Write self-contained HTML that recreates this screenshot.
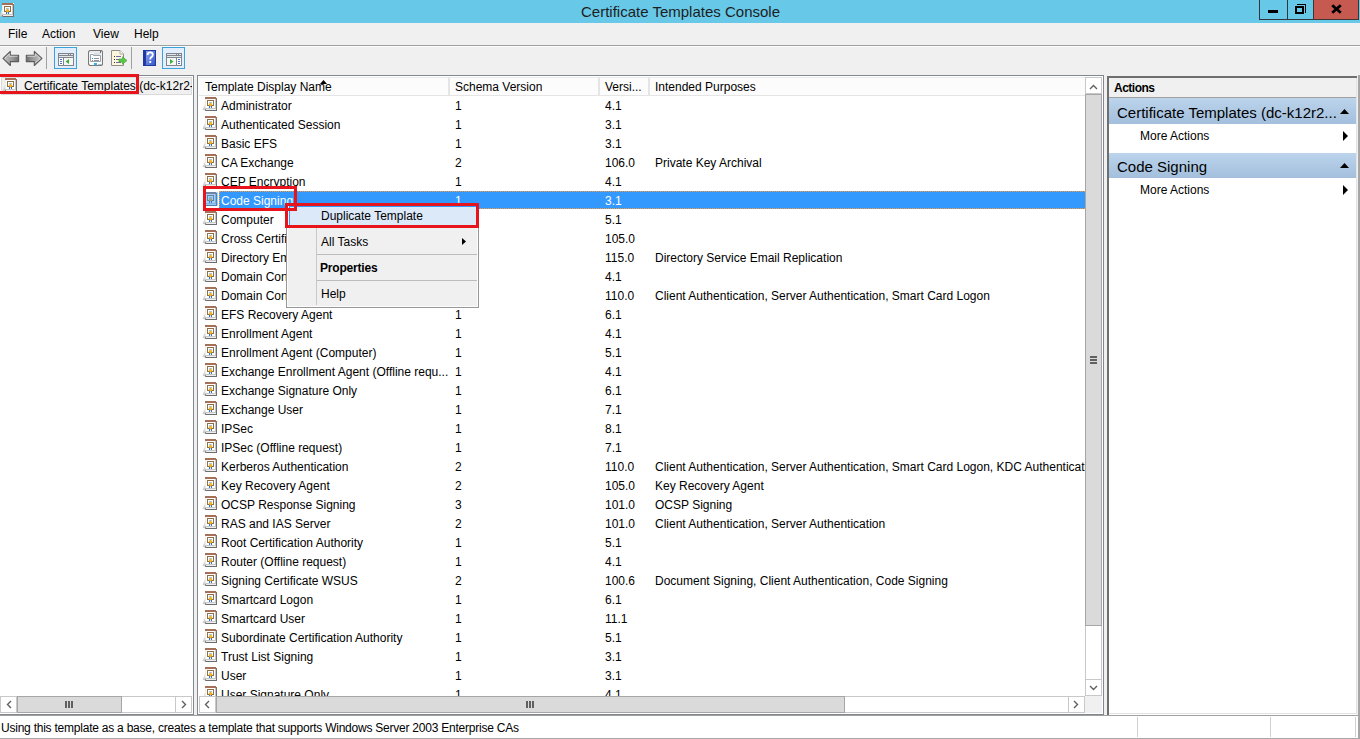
<!DOCTYPE html>
<html><head><meta charset="utf-8"><title>Certificate Templates Console</title>
<style>
*{box-sizing:border-box}
html,body{margin:0;padding:0;width:1360px;height:739px;overflow:hidden;background:#f0f0f0;font-family:"Liberation Sans",sans-serif;font-size:12px;color:#000}
.a{position:absolute}
.t{position:absolute;line-height:20px;white-space:nowrap;font-size:12px}
.ic{position:absolute}
.clip{position:absolute;overflow:hidden}
</style></head><body>
<svg width="0" height="0" style="position:absolute"><symbol id="ci" viewBox="0 0 16 16">
<defs><linearGradient id="wg" x1="0" y1="0" x2="0" y2="1"><stop offset="0" stop-color="#f2f2f2"/><stop offset="1" stop-color="#c4c4c4"/></linearGradient></defs><path d="M0.6 13.8 L3 7.5 L3 14.4 Z" fill="url(#wg)"/>
<g shape-rendering="crispEdges">
<rect x="3" y="1" width="12" height="14" fill="#ffffff"/>
<rect x="3" y="3" width="1" height="9" fill="#ececec"/>
<rect x="3" y="1" width="11" height="2" fill="#a66f57"/>
<rect x="14" y="2" width="1" height="2" fill="#9a6a58"/>
<rect x="13" y="3" width="1" height="10" fill="#c4c4c4"/>
<rect x="14" y="4" width="1" height="11" fill="#6f6f6f"/>
<rect x="3" y="12" width="11" height="1" fill="#c8c8c8"/>
<rect x="3" y="13" width="11" height="1" fill="#eeeeee"/>
<rect x="3" y="14" width="12" height="1" fill="#6c6c6c"/>
<rect x="3" y="13" width="1" height="2" fill="#8a8a8a"/>
<rect x="5" y="4" width="7" height="6" fill="#8d7046"/>
<rect x="6" y="5" width="5" height="4" fill="#ffffff"/>
<rect x="7" y="6" width="3" height="1" fill="#a8c6ef"/>
<rect x="7" y="10" width="1" height="2" fill="#2b6fe6"/>
<rect x="9" y="10" width="1" height="2" fill="#2b6fe6"/>
</g>
<path d="M8.5 6.6 L10.3 8.5 L8.5 11 L6.7 8.5 Z" fill="#e59a08"/>
<circle cx="8.5" cy="8.5" r="1.3" fill="#f4b82a"/>
</symbol></svg>

<div class="a" style="left:0;top:0;width:1360px;height:23px;background:#67c8e8"></div>
<svg class="ic" style="left:-1px;top:2px" width="16" height="16"><use href="#ci"/></svg>
<div class="t" style="left:581px;top:2px;font-size:15px;color:#1e1e1e">Certificate Templates Console</div>
<div class="a" style="left:1259px;top:0;width:100px;height:20px;border:1px solid #30363a;border-top:none;background:#67c8e8"></div>
<div class="a" style="left:1313px;top:0;width:46px;height:20px;border:1px solid #3e3434;border-top:none;background:#c75a50"></div>
<div class="a" style="left:1287px;top:0;width:1px;height:20px;background:#30363a"></div>
<div class="a" style="left:1268px;top:10px;width:10px;height:3px;background:#000"></div>
<div class="a" style="left:1297px;top:4px;width:9px;height:9px;border:1px solid #000;border-width:1px 1px 0 0"></div>
<div class="a" style="left:1295px;top:6px;width:9px;height:8px;border:2px solid #000;border-width:2px 2px 2px 2px"></div>
<svg class="a" style="left:1331px;top:4px" width="11" height="10"><path d="M1.2 1.2 L9.8 8.8 M9.8 1.2 L1.2 8.8" stroke="#000" stroke-width="2.8"/></svg>
<div class="t" style="left:8px;top:24px">File</div>
<div class="t" style="left:42px;top:24px">Action</div>
<div class="t" style="left:93px;top:24px">View</div>
<div class="t" style="left:134px;top:24px">Help</div>
<div class="a" style="left:0;top:45px;width:1360px;height:1px;background:#a0a0a0"></div>
<div class="a" style="left:0;top:46px;width:1360px;height:1px;background:#fcfcfc"></div>
<svg class="a" style="left:2px;top:50px" width="42" height="17">
<defs><linearGradient id="ag" x1="0" y1="0" x2="1" y2="0"><stop offset="0" stop-color="#c4c4c4"/><stop offset="0.6" stop-color="#9a9a9a"/><stop offset="1" stop-color="#6e6e6e"/></linearGradient>
<linearGradient id="ag2" x1="1" y1="0" x2="0" y2="0"><stop offset="0" stop-color="#c4c4c4"/><stop offset="0.6" stop-color="#9a9a9a"/><stop offset="1" stop-color="#6e6e6e"/></linearGradient></defs>
<path d="M1 8.4 L8.3 1.3 L8.3 5.3 L16.6 5.3 L16.6 11.6 L8.3 11.6 L8.3 15.5 Z" fill="url(#ag)" stroke="#5c5c5c" stroke-width="1.1" stroke-linejoin="round"/>
<path d="M2.8 8.4 L7.3 4 L7.3 6.3 L15.6 6.3" fill="none" stroke="#e6e6e6" stroke-width="0.7"/>
<path d="M40 8.4 L32.3 1.3 L32.3 5.3 L24.3 5.3 L24.3 11.6 L32.3 11.6 L32.3 15.5 Z" fill="url(#ag2)" stroke="#5c5c5c" stroke-width="1.1" stroke-linejoin="round"/>
<path d="M38.2 8.4 L33.3 4 L33.3 6.3 M25.3 6.3 L33.3 6.3 M38.2 8.4 L33.3 12.8" fill="none" stroke="#e6e6e6" stroke-width="0.7"/>
</svg>
<div class="a" style="left:46px;top:47px;width:1px;height:22px;background:#a0a0a0"></div>
<div class="a" style="left:54px;top:47px;width:23px;height:22px;border:1px solid #3ba2dc;background:#e2eefb"></div>
<svg class="a" style="left:58px;top:53px" width="16" height="13" shape-rendering="crispEdges">
<rect x="0" y="0" width="16" height="13" fill="#80858d"/>
<rect x="1" y="1" width="14" height="1" fill="#e4e6ea"/>
<rect x="12" y="1" width="1" height="1" fill="#80858d"/><rect x="10" y="1" width="1" height="1" fill="#80858d"/>
<rect x="1" y="3" width="14" height="1" fill="#e4e6ea"/>
<rect x="1" y="5" width="4" height="7" fill="#fff"/>
<rect x="6" y="5" width="9" height="7" fill="#f6f6f6"/>
<rect x="2" y="6" width="2" height="1" fill="#3d70c0"/><rect x="2" y="8" width="2" height="1" fill="#3d70c0"/><rect x="2" y="10" width="2" height="1" fill="#3d70c0"/>
<path d="M11 6 L7.5 8.5 L11 11 Z" fill="#3ab03a" shape-rendering="auto"/>
</svg>
<svg class="a" style="left:88px;top:50px" width="15" height="16">
<rect x="0.5" y="0.5" width="14" height="15" rx="2" fill="#fff" stroke="#7a7a7a" stroke-width="1.2"/>
<rect x="2" y="1.5" width="11" height="1" fill="#d6d8dc"/>
<rect x="12" y="1" width="1" height="2" fill="#5a6a90"/>
<path d="M2.5 4.5 L5.5 4.5 L5.5 5.5 L12.5 5.5 L12.5 11.5 L2.5 11.5 Z" fill="#fff" stroke="#9da3ad" stroke-width="1"/>
<rect x="7" y="4" width="2" height="1" fill="#fff"/><rect x="10" y="4" width="2" height="1" fill="#fff"/>
<rect x="6" y="3.5" width="6.5" height="1" fill="#b8bdc6"/>
<rect x="4" y="8" width="1" height="1" fill="#1ea0e8"/><rect x="6" y="8" width="5" height="1" fill="#8d939c"/>
<rect x="4" y="10" width="1" height="1" fill="#888"/><rect x="6" y="10" width="5" height="1" fill="#8d939c"/>
<rect x="6" y="13" width="3" height="2" fill="#26b6f0"/>
<rect x="10" y="14" width="3" height="1" fill="#bbb"/>
</svg>
<svg class="a" style="left:111px;top:50px" width="17" height="16">
<path d="M0.5 0.5 L9 0.5 L12.5 4 L12.5 15.5 L0.5 15.5 Z" fill="#fcf6dc" stroke="#8e8e8e"/>
<path d="M9 0.5 L9 4 L12.5 4" fill="#fff" stroke="#aaa"/>
<rect x="3" y="6" width="1" height="1" fill="#333"/><rect x="5" y="6" width="5" height="1" fill="#6f6aa8"/>
<rect x="3" y="9" width="1" height="1" fill="#333"/><rect x="5" y="9" width="3" height="1" fill="#6f6aa8"/>
<rect x="3" y="12" width="1" height="1" fill="#333"/><rect x="5" y="12" width="5" height="1" fill="#6f6aa8"/>
<path d="M8 9 L11.5 9 L11.5 6.8 L16 10.5 L11.5 14.2 L11.5 12 L8 12 Z" fill="#5cc84a" stroke="#3aa02c" stroke-width="0.6"/>
</svg>
<div class="a" style="left:131px;top:47px;width:1px;height:22px;background:#a0a0a0"></div>
<svg class="a" style="left:143px;top:50px" width="13" height="16">
<defs><linearGradient id="hg" x1="0" y1="0" x2="1" y2="1"><stop offset="0" stop-color="#8aa6f0"/><stop offset="1" stop-color="#3656c8"/></linearGradient></defs>
<rect x="0" y="0" width="13" height="16" fill="#1f3aa0"/>
<rect x="3" y="1" width="9" height="14" fill="url(#hg)"/>
<path d="M4.6 5 Q4.6 2.4 7.2 2.4 Q9.8 2.4 9.8 4.8 Q9.8 6.4 8 7.4 Q7.2 7.9 7.2 9.4" fill="none" stroke="#fff" stroke-width="1.8"/>
<rect x="6.3" y="11" width="1.9" height="1.9" fill="#fff"/>
</svg>
<div class="a" style="left:162px;top:47px;width:23px;height:22px;border:1px solid #3ba2dc;background:#e2eefb"></div>
<svg class="a" style="left:166px;top:53px" width="16" height="13" shape-rendering="crispEdges">
<rect x="0" y="0" width="16" height="13" fill="#80858d"/>
<rect x="1" y="1" width="14" height="1" fill="#e4e6ea"/>
<rect x="12" y="1" width="1" height="1" fill="#80858d"/><rect x="10" y="1" width="1" height="1" fill="#80858d"/>
<rect x="1" y="3" width="14" height="1" fill="#e4e6ea"/>
<rect x="1" y="5" width="9" height="7" fill="#f6f6f6"/>
<rect x="11" y="5" width="4" height="7" fill="#fff"/>
<rect x="12" y="6" width="2" height="1" fill="#3d70c0"/><rect x="12" y="8" width="2" height="1" fill="#3d70c0"/><rect x="12" y="10" width="2" height="1" fill="#3d70c0"/>
<path d="M4 6 L7.5 8.5 L4 11 Z" fill="#3ab03a" shape-rendering="auto"/>
</svg>
<div class="a" style="left:0;top:75px;width:194px;height:641px;background:#fff;border:1px solid #828790;border-left:none;border-bottom:2px solid #828790"></div>
<div class="a" style="left:1px;top:77px;width:191px;height:18px;background:#f0f0f0;border:1px solid #dadada"></div>
<div class="clip" style="left:0;top:76px;width:192px;height:20px"><svg class="ic" style="left:2px;top:1px" width="16" height="16"><use href="#ci"/></svg><div class="t" style="left:24px;top:0px">Certificate Templates (dc-k12r2-ca)</div></div>
<div class="a" style="left:0;top:696px;width:192px;height:17px;background:#fff;border:1px solid #c8c8c8"></div>
<div class="a" style="left:17px;top:696px;width:105px;height:17px;background:#dadada;border:1px solid #a6a6a6"></div>
<div class="a" style="left:175px;top:696px;width:1px;height:17px;background:#c8c8c8"></div>
<div class="a" style="left:16px;top:696px;width:1px;height:17px;background:#c8c8c8"></div>
<div class="a" style="left:197px;top:75px;width:907px;height:641px;background:#fff;border:1px solid #828790;border-bottom:2px solid #828790"></div>
<div class="a" style="left:199px;top:77px;width:886px;height:19px;background:#fcfcfc;border-top:1px solid #ececec;border-bottom:1px solid #e5e5e5"></div>
<div class="a" style="left:448px;top:77px;width:2px;height:18px;background:#e5e5e5"></div>
<div class="a" style="left:598px;top:77px;width:2px;height:18px;background:#e5e5e5"></div>
<div class="a" style="left:648px;top:77px;width:2px;height:18px;background:#e5e5e5"></div>
<div class="t" style="left:205px;top:77px">Template Display Name</div>
<div class="t" style="left:455px;top:77px">Schema Version</div>
<div class="t" style="left:605px;top:77px">Versi...</div>
<div class="t" style="left:655px;top:77px">Intended Purposes</div>
<svg class="a" style="left:320px;top:80px" width="7" height="4"><path d="M0 4 L3.5 0 L7 4 Z" fill="#000"/></svg>
<div class="clip" style="left:198px;top:96px;width:887px;height:600px">
<svg class="ic" style="left:4px;top:0px" width="16" height="16"><use href="#ci"/></svg>
<div class="t" style="left:23px;top:0px;color:#000">Administrator</div>
<div class="t" style="left:257px;top:0px;color:#000">1</div>
<div class="t" style="left:407px;top:0px;color:#000">4.1</div>
<svg class="ic" style="left:4px;top:19px" width="16" height="16"><use href="#ci"/></svg>
<div class="t" style="left:23px;top:19px;color:#000">Authenticated Session</div>
<div class="t" style="left:257px;top:19px;color:#000">1</div>
<div class="t" style="left:407px;top:19px;color:#000">3.1</div>
<svg class="ic" style="left:4px;top:38px" width="16" height="16"><use href="#ci"/></svg>
<div class="t" style="left:23px;top:38px;color:#000">Basic EFS</div>
<div class="t" style="left:257px;top:38px;color:#000">1</div>
<div class="t" style="left:407px;top:38px;color:#000">3.1</div>
<svg class="ic" style="left:4px;top:57px" width="16" height="16"><use href="#ci"/></svg>
<div class="t" style="left:23px;top:57px;color:#000">CA Exchange</div>
<div class="t" style="left:257px;top:57px;color:#000">2</div>
<div class="t" style="left:407px;top:57px;color:#000">106.0</div>
<div class="t" style="left:457px;top:57px;color:#000">Private Key Archival</div>
<svg class="ic" style="left:4px;top:76px" width="16" height="16"><use href="#ci"/></svg>
<div class="t" style="left:23px;top:76px;color:#000">CEP Encryption</div>
<div class="t" style="left:257px;top:76px;color:#000">1</div>
<div class="t" style="left:407px;top:76px;color:#000">4.1</div>
<div class="a" style="left:21px;top:95px;width:866px;height:18px;background:#3399ff;border-top:1px dotted #ff9a2e;border-bottom:1px dotted #ff9a2e;border-left:1px dotted #ff9a2e"></div>
<svg class="ic" style="left:4px;top:95px" width="16" height="16"><use href="#ci"/></svg>
<div class="a" style="left:7px;top:96px;width:13px;height:14px;background:rgba(51,153,255,0.45);border-radius:1px"></div>
<div class="t" style="left:23px;top:95px;color:#fff">Code Signing</div>
<div class="t" style="left:257px;top:95px;color:#fff">1</div>
<div class="t" style="left:407px;top:95px;color:#fff">3.1</div>
<svg class="ic" style="left:4px;top:114px" width="16" height="16"><use href="#ci"/></svg>
<div class="t" style="left:23px;top:114px;color:#000">Computer</div>
<div class="t" style="left:257px;top:114px;color:#000">1</div>
<div class="t" style="left:407px;top:114px;color:#000">5.1</div>
<svg class="ic" style="left:4px;top:133px" width="16" height="16"><use href="#ci"/></svg>
<div class="t" style="left:23px;top:133px;color:#000">Cross Certification Authority</div>
<div class="t" style="left:257px;top:133px;color:#000">2</div>
<div class="t" style="left:407px;top:133px;color:#000">105.0</div>
<svg class="ic" style="left:4px;top:152px" width="16" height="16"><use href="#ci"/></svg>
<div class="t" style="left:23px;top:152px;color:#000">Directory Email Replication</div>
<div class="t" style="left:257px;top:152px;color:#000">2</div>
<div class="t" style="left:407px;top:152px;color:#000">115.0</div>
<div class="t" style="left:457px;top:152px;color:#000">Directory Service Email Replication</div>
<svg class="ic" style="left:4px;top:171px" width="16" height="16"><use href="#ci"/></svg>
<div class="t" style="left:23px;top:171px;color:#000">Domain Controller</div>
<div class="t" style="left:257px;top:171px;color:#000">1</div>
<div class="t" style="left:407px;top:171px;color:#000">4.1</div>
<svg class="ic" style="left:4px;top:190px" width="16" height="16"><use href="#ci"/></svg>
<div class="t" style="left:23px;top:190px;color:#000">Domain Controller Authentication</div>
<div class="t" style="left:257px;top:190px;color:#000">2</div>
<div class="t" style="left:407px;top:190px;color:#000">110.0</div>
<div class="t" style="left:457px;top:190px;color:#000">Client Authentication, Server Authentication, Smart Card Logon</div>
<svg class="ic" style="left:4px;top:209px" width="16" height="16"><use href="#ci"/></svg>
<div class="t" style="left:23px;top:209px;color:#000">EFS Recovery Agent</div>
<div class="t" style="left:257px;top:209px;color:#000">1</div>
<div class="t" style="left:407px;top:209px;color:#000">6.1</div>
<svg class="ic" style="left:4px;top:228px" width="16" height="16"><use href="#ci"/></svg>
<div class="t" style="left:23px;top:228px;color:#000">Enrollment Agent</div>
<div class="t" style="left:257px;top:228px;color:#000">1</div>
<div class="t" style="left:407px;top:228px;color:#000">4.1</div>
<svg class="ic" style="left:4px;top:247px" width="16" height="16"><use href="#ci"/></svg>
<div class="t" style="left:23px;top:247px;color:#000">Enrollment Agent (Computer)</div>
<div class="t" style="left:257px;top:247px;color:#000">1</div>
<div class="t" style="left:407px;top:247px;color:#000">5.1</div>
<svg class="ic" style="left:4px;top:266px" width="16" height="16"><use href="#ci"/></svg>
<div class="t" style="left:23px;top:266px;color:#000">Exchange Enrollment Agent (Offline requ...</div>
<div class="t" style="left:257px;top:266px;color:#000">1</div>
<div class="t" style="left:407px;top:266px;color:#000">4.1</div>
<svg class="ic" style="left:4px;top:285px" width="16" height="16"><use href="#ci"/></svg>
<div class="t" style="left:23px;top:285px;color:#000">Exchange Signature Only</div>
<div class="t" style="left:257px;top:285px;color:#000">1</div>
<div class="t" style="left:407px;top:285px;color:#000">6.1</div>
<svg class="ic" style="left:4px;top:304px" width="16" height="16"><use href="#ci"/></svg>
<div class="t" style="left:23px;top:304px;color:#000">Exchange User</div>
<div class="t" style="left:257px;top:304px;color:#000">1</div>
<div class="t" style="left:407px;top:304px;color:#000">7.1</div>
<svg class="ic" style="left:4px;top:323px" width="16" height="16"><use href="#ci"/></svg>
<div class="t" style="left:23px;top:323px;color:#000">IPSec</div>
<div class="t" style="left:257px;top:323px;color:#000">1</div>
<div class="t" style="left:407px;top:323px;color:#000">8.1</div>
<svg class="ic" style="left:4px;top:342px" width="16" height="16"><use href="#ci"/></svg>
<div class="t" style="left:23px;top:342px;color:#000">IPSec (Offline request)</div>
<div class="t" style="left:257px;top:342px;color:#000">1</div>
<div class="t" style="left:407px;top:342px;color:#000">7.1</div>
<svg class="ic" style="left:4px;top:361px" width="16" height="16"><use href="#ci"/></svg>
<div class="t" style="left:23px;top:361px;color:#000">Kerberos Authentication</div>
<div class="t" style="left:257px;top:361px;color:#000">2</div>
<div class="t" style="left:407px;top:361px;color:#000">110.0</div>
<div class="t" style="left:457px;top:361px;color:#000">Client Authentication, Server Authentication, Smart Card Logon, KDC Authentication</div>
<svg class="ic" style="left:4px;top:380px" width="16" height="16"><use href="#ci"/></svg>
<div class="t" style="left:23px;top:380px;color:#000">Key Recovery Agent</div>
<div class="t" style="left:257px;top:380px;color:#000">2</div>
<div class="t" style="left:407px;top:380px;color:#000">105.0</div>
<div class="t" style="left:457px;top:380px;color:#000">Key Recovery Agent</div>
<svg class="ic" style="left:4px;top:399px" width="16" height="16"><use href="#ci"/></svg>
<div class="t" style="left:23px;top:399px;color:#000">OCSP Response Signing</div>
<div class="t" style="left:257px;top:399px;color:#000">3</div>
<div class="t" style="left:407px;top:399px;color:#000">101.0</div>
<div class="t" style="left:457px;top:399px;color:#000">OCSP Signing</div>
<svg class="ic" style="left:4px;top:418px" width="16" height="16"><use href="#ci"/></svg>
<div class="t" style="left:23px;top:418px;color:#000">RAS and IAS Server</div>
<div class="t" style="left:257px;top:418px;color:#000">2</div>
<div class="t" style="left:407px;top:418px;color:#000">101.0</div>
<div class="t" style="left:457px;top:418px;color:#000">Client Authentication, Server Authentication</div>
<svg class="ic" style="left:4px;top:437px" width="16" height="16"><use href="#ci"/></svg>
<div class="t" style="left:23px;top:437px;color:#000">Root Certification Authority</div>
<div class="t" style="left:257px;top:437px;color:#000">1</div>
<div class="t" style="left:407px;top:437px;color:#000">5.1</div>
<svg class="ic" style="left:4px;top:456px" width="16" height="16"><use href="#ci"/></svg>
<div class="t" style="left:23px;top:456px;color:#000">Router (Offline request)</div>
<div class="t" style="left:257px;top:456px;color:#000">1</div>
<div class="t" style="left:407px;top:456px;color:#000">4.1</div>
<svg class="ic" style="left:4px;top:475px" width="16" height="16"><use href="#ci"/></svg>
<div class="t" style="left:23px;top:475px;color:#000">Signing Certificate WSUS</div>
<div class="t" style="left:257px;top:475px;color:#000">2</div>
<div class="t" style="left:407px;top:475px;color:#000">100.6</div>
<div class="t" style="left:457px;top:475px;color:#000">Document Signing, Client Authentication, Code Signing</div>
<svg class="ic" style="left:4px;top:494px" width="16" height="16"><use href="#ci"/></svg>
<div class="t" style="left:23px;top:494px;color:#000">Smartcard Logon</div>
<div class="t" style="left:257px;top:494px;color:#000">1</div>
<div class="t" style="left:407px;top:494px;color:#000">6.1</div>
<svg class="ic" style="left:4px;top:513px" width="16" height="16"><use href="#ci"/></svg>
<div class="t" style="left:23px;top:513px;color:#000">Smartcard User</div>
<div class="t" style="left:257px;top:513px;color:#000">1</div>
<div class="t" style="left:407px;top:513px;color:#000">11.1</div>
<svg class="ic" style="left:4px;top:532px" width="16" height="16"><use href="#ci"/></svg>
<div class="t" style="left:23px;top:532px;color:#000">Subordinate Certification Authority</div>
<div class="t" style="left:257px;top:532px;color:#000">1</div>
<div class="t" style="left:407px;top:532px;color:#000">5.1</div>
<svg class="ic" style="left:4px;top:551px" width="16" height="16"><use href="#ci"/></svg>
<div class="t" style="left:23px;top:551px;color:#000">Trust List Signing</div>
<div class="t" style="left:257px;top:551px;color:#000">1</div>
<div class="t" style="left:407px;top:551px;color:#000">3.1</div>
<svg class="ic" style="left:4px;top:570px" width="16" height="16"><use href="#ci"/></svg>
<div class="t" style="left:23px;top:570px;color:#000">User</div>
<div class="t" style="left:257px;top:570px;color:#000">1</div>
<div class="t" style="left:407px;top:570px;color:#000">3.1</div>
<svg class="ic" style="left:4px;top:589px" width="16" height="16"><use href="#ci"/></svg>
<div class="t" style="left:23px;top:589px;color:#000">User Signature Only</div>
<div class="t" style="left:257px;top:589px;color:#000">1</div>
<div class="t" style="left:407px;top:589px;color:#000">4.1</div>
</div>
<div class="a" style="left:1085px;top:77px;width:17px;height:619px;background:#fff;border:1px solid #c8c8c8;border-top:none;border-bottom:none"></div>
<div class="a" style="left:1085px;top:77px;width:17px;height:17px;background:#fff;border:1px solid #c8c8c8"></div>
<svg class="a" style="left:1089px;top:84px" width="9" height="6"><path d="M1 5 L4.5 1.5 L8 5" fill="none" stroke="#606060" stroke-width="1.4"/></svg>
<div class="a" style="left:1085px;top:94px;width:17px;height:532px;background:#dadada;border:1px solid #a6a6a6"></div>
<div class="a" style="left:1090px;top:356px;width:7px;height:2px;background:#606060;box-shadow:0 3px 0 #606060,0 6px 0 #606060"></div>
<div class="a" style="left:1085px;top:679px;width:17px;height:17px;background:#fff;border:1px solid #c8c8c8"></div>
<svg class="a" style="left:1089px;top:685px" width="9" height="6"><path d="M1 1 L4.5 4.5 L8 1" fill="none" stroke="#606060" stroke-width="1.4"/></svg>
<div class="a" style="left:199px;top:696px;width:886px;height:17px;background:#fff;border:1px solid #c8c8c8"></div>
<div class="a" style="left:199px;top:696px;width:17px;height:17px;background:#fff;border:1px solid #c8c8c8"></div>
<svg class="a" style="left:204px;top:700px" width="6" height="9"><path d="M5 1 L1.5 4.5 L5 8" fill="none" stroke="#606060" stroke-width="1.4"/></svg>
<div class="a" style="left:216px;top:696px;width:629px;height:17px;background:#dadada;border:1px solid #a6a6a6"></div>
<div class="a" style="left:526px;top:701px;width:2px;height:7px;background:#606060;box-shadow:3px 0 0 #606060,6px 0 0 #606060"></div>
<div class="a" style="left:1068px;top:696px;width:17px;height:17px;background:#fff;border:1px solid #c8c8c8"></div>
<svg class="a" style="left:1073px;top:700px" width="6" height="9"><path d="M1 1 L4.5 4.5 L1 8" fill="none" stroke="#606060" stroke-width="1.4"/></svg>
<div class="a" style="left:1085px;top:696px;width:17px;height:17px;background:#f0f0f0"></div>
<svg class="a" style="left:6px;top:700px" width="6" height="9"><path d="M5 1 L1.5 4.5 L5 8" fill="none" stroke="#606060" stroke-width="1.4"/></svg>
<svg class="a" style="left:181px;top:700px" width="6" height="9"><path d="M1 1 L4.5 4.5 L1 8" fill="none" stroke="#606060" stroke-width="1.4"/></svg>
<div class="a" style="left:65px;top:701px;width:2px;height:7px;background:#606060;box-shadow:3px 0 0 #606060,6px 0 0 #606060"></div>
<div class="a" style="left:1107px;top:76px;width:250px;height:639px;background:#fff;border:2px solid #6e6e6e;border-right:none;border-bottom:none"></div>
<div class="a" style="left:1356px;top:78px;width:1px;height:636px;background:#e3e3e3"></div>
<div class="a" style="left:1109px;top:713px;width:248px;height:1px;background:#e3e3e3"></div>
<div class="a" style="left:1358px;top:75px;width:2px;height:664px;background:#a6a6a6"></div>
<div class="a" style="left:1109px;top:78px;width:247px;height:20px;background:#f0f0f0;border-bottom:1px solid #a0a0a0"></div>
<div class="t" style="left:1114px;top:78px;font-weight:bold;letter-spacing:-0.5px">Actions</div>
<div class="a" style="left:1109px;top:98px;width:247px;height:26px;background:linear-gradient(#bcd4ec,#a3bfdd)"></div>
<div class="t" style="left:1117px;top:103px;font-size:15px">Certificate Templates (dc-k12r2...</div>
<svg class="a" style="left:1340px;top:109px" width="9" height="5"><path d="M0 5 L4.5 0 L9 5 Z" fill="#000"/></svg>
<div class="t" style="left:1140px;top:126px">More Actions</div>
<svg class="a" style="left:1343px;top:131px" width="6" height="10"><path d="M0 0 L5 5 L0 10 Z" fill="#000"/></svg>
<div class="a" style="left:1109px;top:153px;width:247px;height:25px;background:linear-gradient(#bcd4ec,#a3bfdd)"></div>
<div class="t" style="left:1117px;top:157px;font-size:15px">Code Signing</div>
<svg class="a" style="left:1340px;top:163px" width="9" height="5"><path d="M0 5 L4.5 0 L9 5 Z" fill="#000"/></svg>
<div class="t" style="left:1140px;top:180px">More Actions</div>
<svg class="a" style="left:1343px;top:185px" width="6" height="10"><path d="M0 0 L5 5 L0 10 Z" fill="#000"/></svg>
<div class="a" style="left:0;top:716px;width:1358px;height:23px;background:#fff;border-bottom:1px solid #a8a8a8"></div>
<div class="a" style="left:0;top:715px;width:1358px;height:1px;background:#a0a0a0"></div>
<div class="t" style="left:1px;top:718px;letter-spacing:-0.23px">Using this template as a base, creates a template that supports Windows Server 2003 Enterprise CAs</div>
<div class="a" style="left:1137px;top:717px;width:1px;height:20px;background:#d0d0d0"></div>
<div class="a" style="left:1270px;top:717px;width:1px;height:20px;background:#d0d0d0"></div>
<div class="a" style="left:1355px;top:717px;width:1px;height:20px;background:#d0d0d0"></div>
<div class="a" style="left:286px;top:204px;width:193px;height:104px;background:#f0f0f0;border:1px solid #979797;box-shadow:inset 1px 1px 0 #fcfcfc,inset -1px -1px 0 #fcfcfc"></div>
<div class="a" style="left:316px;top:228px;width:1px;height:77px;background:#c8c8c8"></div>
<div class="a" style="left:289px;top:206px;width:188px;height:20px;background:#dce9f9;border:1px solid #3399ff"></div>
<div class="t" style="left:321px;top:206px">Duplicate Template</div>
<div class="a" style="left:317px;top:254px;width:160px;height:1px;background:#bcbcbc"></div>
<div class="t" style="left:321px;top:232px">All Tasks</div>
<svg class="a" style="left:462px;top:238px" width="4" height="7"><path d="M0 0 L4 3.5 L0 7 Z" fill="#000"/></svg>
<div class="a" style="left:317px;top:280px;width:160px;height:1px;background:#bcbcbc"></div>
<div class="t" style="left:320px;top:258px;font-weight:bold;letter-spacing:-0.2px">Properties</div>
<div class="t" style="left:321px;top:284px">Help</div>
<div class="a" style="left:-3px;top:74px;width:142px;height:20px;border:3px solid #e8141c"></div>
<div class="a" style="left:203px;top:186px;width:94px;height:25px;border:3px solid #e8141c"></div>
<div class="a" style="left:285px;top:203px;width:194px;height:25px;border:3px solid #e8141c"></div>
</body></html>
